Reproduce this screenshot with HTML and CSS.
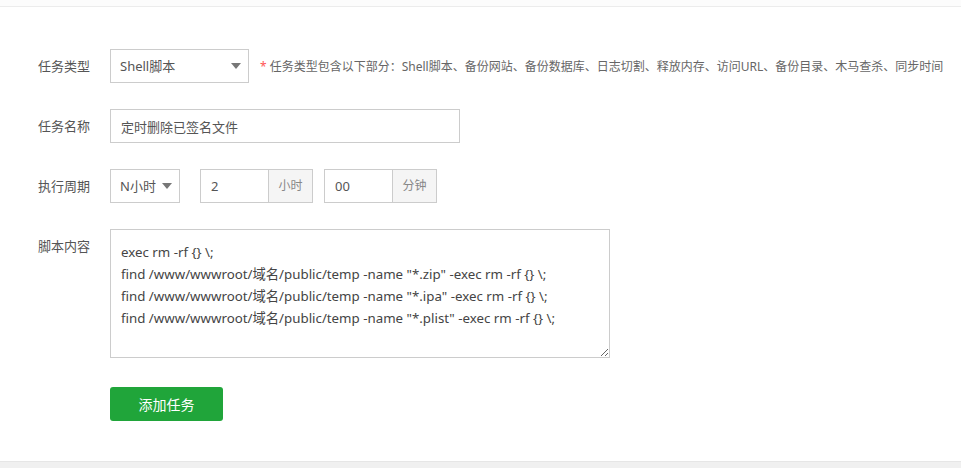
FILE: index.html
```html
<!DOCTYPE html>
<html>
  <head>
    <meta charset="UTF-8">
    <title>添加计划任务</title>
    <link rel="stylesheet" href="styles.css">
  </head>
  <body>
    <div class="tabbar"></div>
    <div class="main">
      <div class="form">
        <div class="line">
          <span class="tname">任务类型</span>
          <div class="info">
            <div class="select wide">Shell脚本<i class="caret"></i></div>
            <span class="tips"><em>*</em> 任务类型包含以下部分：Shell脚本、备份网站、备份数据库、日志切割、释放内存、访问URL、备份目录、木马查杀、同步时间</span>
          </div>
        </div>
        <div class="line">
          <span class="tname">任务名称</span>
          <div class="info">
            <input class="input name" type="text" value="定时删除已签名文件">
          </div>
        </div>
        <div class="line">
          <span class="tname">执行周期</span>
          <div class="info">
            <div class="select small">N小时<i class="caret"></i></div>
            <div class="group first">
              <input class="input num" type="text" value="2">
              <span class="addon">小时</span>
            </div>
            <div class="group">
              <input class="input num" type="text" value="00">
              <span class="addon">分钟</span>
            </div>
          </div>
        </div>
        <div class="line">
          <span class="tname">脚本内容</span>
          <div class="info">
            <textarea class="script">exec rm -rf {} \;
find /www/wwwroot/域名/public/temp -name "*.zip" -exec rm -rf {} \;
find /www/wwwroot/域名/public/temp -name "*.ipa" -exec rm -rf {} \;
find /www/wwwroot/域名/public/temp -name "*.plist" -exec rm -rf {} \;</textarea>
          </div>
        </div>
        <div class="line submit">
          <span class="tname"></span>
          <div class="info">
            <button class="btn">添加任务</button>
          </div>
        </div>
      </div>
    </div>
    <div class="footer"></div>
  </body>
</html>
```

FILE: styles.css
```css
body { background: #fff; color: #555; display: flex; flex-direction: column; font-family: "Noto Sans", "Noto Sans CJK SC", sans-serif; font-size: 13px; height: 100vh; margin: 0; overflow: hidden }
em { color: #f55; font-style: normal }
input, textarea, button { font-family: inherit }

.tabbar { background: #fcfcfc; border-bottom: 1px solid #ececec; flex: none; height: 6px }
.main { flex: 1 1; min-height: 0 }
.footer { background: #f0f0f0; border-top: 1px solid #e6e6e6; flex: none; height: 6px }

.form { padding-top: 42px }
.line { display: flex; margin-bottom: 26px }
.line.submit { margin-top: 29px }
.tname { flex: none; line-height: 34px; padding-right: 20px; text-align: right; width: 90px }
.info { align-items: center; display: flex }

.select { border: 1px solid #ccc; box-sizing: border-box; color: #555; height: 34px; line-height: 32px; padding-left: 9px; position: relative }
.select.wide { width: 139px }
.select.small { width: 70px }
.caret { border-left: 5px solid transparent; border-right: 5px solid transparent; border-top: 6px solid #777; height: 0; margin-top: -3px; position: absolute; right: 7px; top: 50%; width: 0 }
.tips { color: #666; font-size: 12px; margin-left: 11px }

.input { border: 1px solid #ccc; box-sizing: border-box; color: #555; font-size: 13px; height: 34px; outline: none; padding: 0 10px }
.input.name { width: 350px }
.input.num { width: 69px }
.group { display: flex; margin-left: 11px }
.group.first { margin-left: 20px }
.addon { background: #f5f5f5; border: 1px solid #ccc; border-left: none; box-sizing: border-box; color: #888; font-size: 12px; height: 34px; line-height: 32px; text-align: center; width: 44px }

.script { border: 1px solid #ccc; box-sizing: border-box; color: #444; font-size: 13.3px; height: 129px; line-height: 22px; outline: none; padding: 11px 10px; width: 500px }

.btn { background: #20a53a; border: none; border-radius: 3px; color: #fff; font-size: 14px; height: 34px; width: 113px }
```
